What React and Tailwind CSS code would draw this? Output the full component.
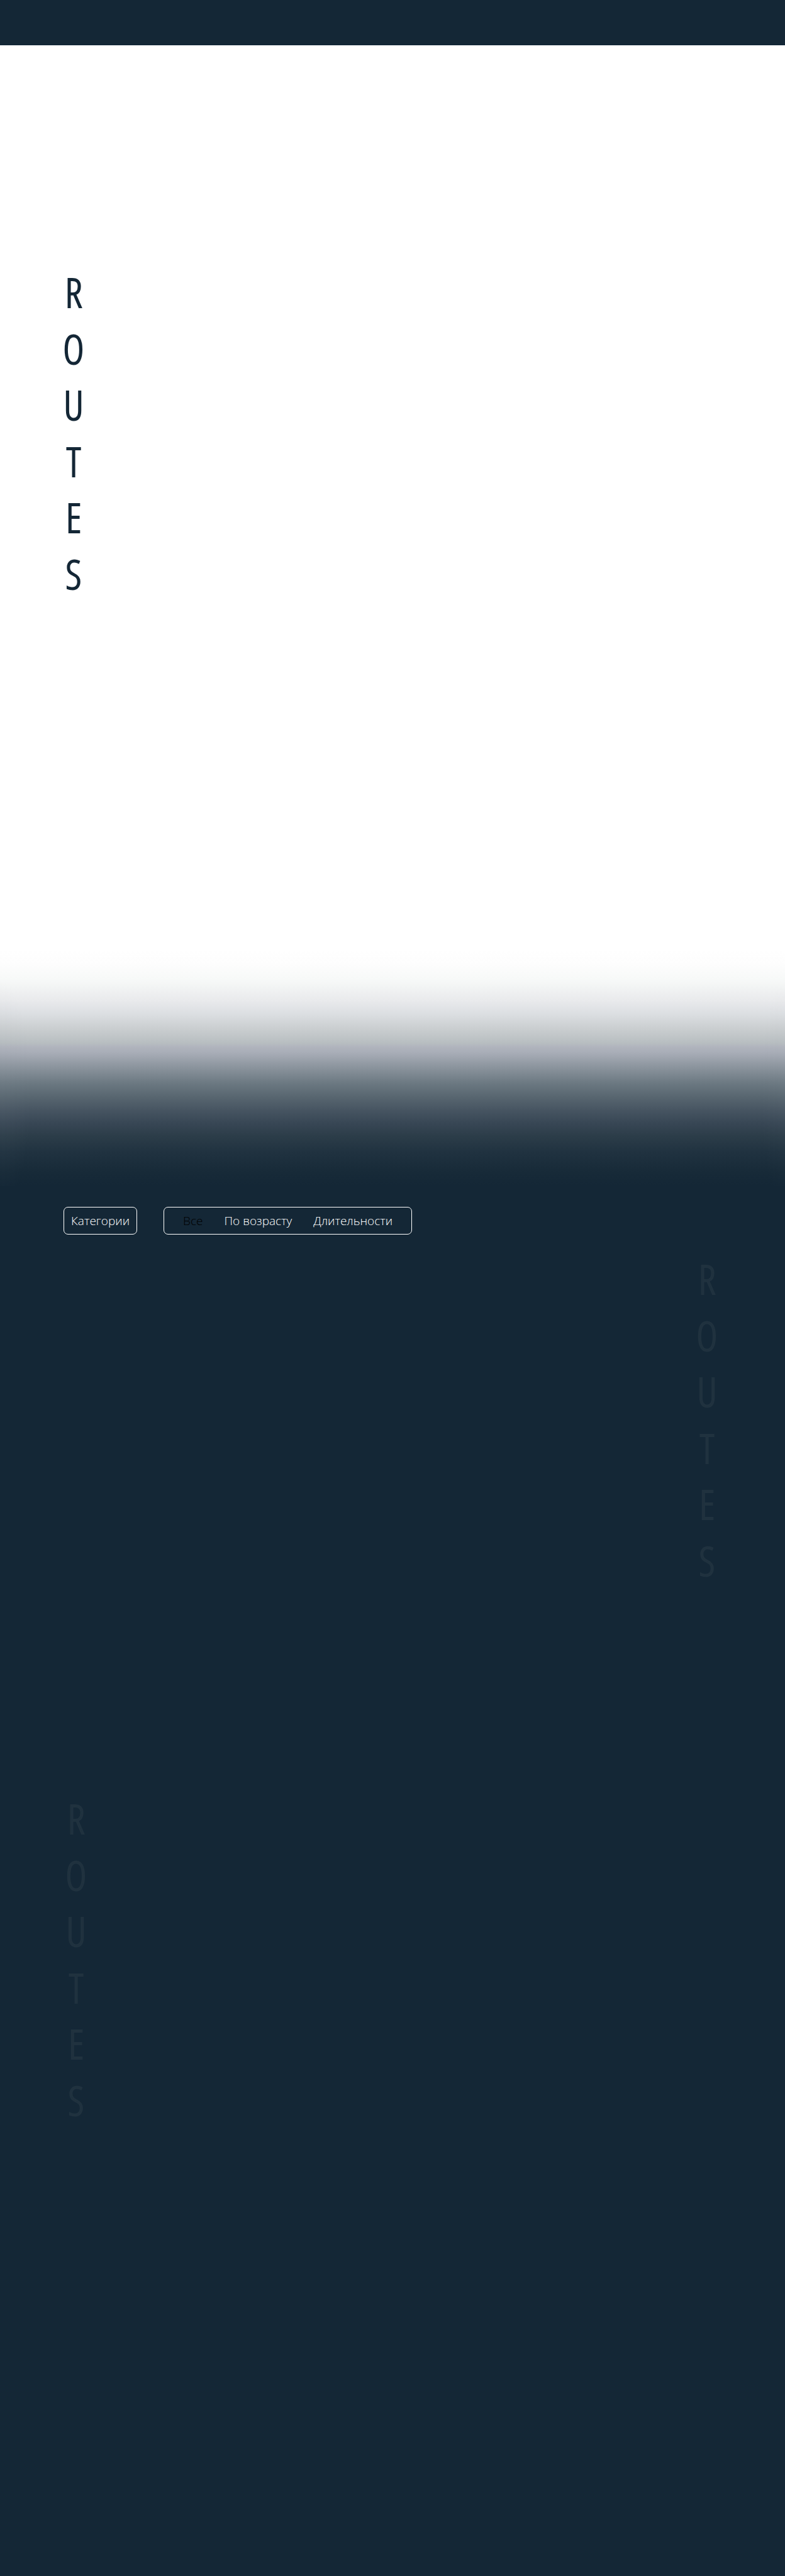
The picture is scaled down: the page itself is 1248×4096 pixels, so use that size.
const LETTERS = ["R", "O", "U", "T", "E", "S"];
const FILTERS = ["Все", "По возрасту", "Длительности"];

function VerticalTitle({ as: Tag = "div", className = "", ...rest }) {
  return (
    <Tag
      className={`flex h-[536px] w-8 flex-col items-center justify-between font-['Open_Sans_Condensed_Light','Open_Sans_Condensed','Open_Sans',sans-serif] text-[64px] leading-[88px] font-normal [-webkit-text-stroke-width:2px] ${className}`}
      {...rest}
    >
      {LETTERS.map((letter) => (
        <span key={letter}>{letter}</span>
      ))}
    </Tag>
  );
}

export default function App() {
  return (
    <div className="flex min-h-screen flex-col bg-[#142736] font-['Open_Sans',sans-serif]">
      <header className="h-[72px] border-b border-[#12283a] bg-[#142736]" />

      <section className="bg-white pt-[349px] pb-[554px] pl-[101px]">
        <VerticalTitle as="h1" className="text-[#142736]" />
      </section>

      {/* Soft transition from the white hero to the dark catalogue */}
      <div className="h-[375px] bg-[radial-gradient(50px_180px_at_0_60%,#8b949d12,#8b949d00),radial-gradient(40px_180px_at_100%_60%,#8b949d0a,#8b949d00),linear-gradient(#ffffff_0px,#fdfdfd_22px,#f7f9f8_47px,#e9eaec_80px,#dbdee1_102px,#c9cdcf_126px,#b8bec1_147px,#b0b4bd_154px,#a8adb7_163px,#8b949d_186px,#6c7982_211px,#586670_233px,#465461_255px,#394856_273px,#2c3d49_295px,#203240_321px,#172a38_353px,#142736_375px)]" />

      <main className="flex flex-col pt-[33px] pb-[711px]">
        <div className="flex gap-[42px] pl-[101px] text-[19px] leading-[26px] font-light text-white">
          <button
            type="button"
            className="flex h-11 items-center rounded-[7px] border border-white px-[11px]"
          >
            Категории
          </button>
          <div className="flex h-11 items-center gap-[34px] rounded-[7px] border border-white px-[30px]">
            {FILTERS.map((name, i) => (
              <button key={name} type="button" className={i === 0 ? "text-black" : "text-white"}>
                {name}
              </button>
            ))}
          </div>
        </div>

        <VerticalTitle aria-hidden="true" className="mt-[27px] mr-[108px] self-end text-[#20323f]" />
        <VerticalTitle aria-hidden="true" className="mt-[322px] ml-[105px] text-[#20323f]" />
      </main>
    </div>
  );
}
